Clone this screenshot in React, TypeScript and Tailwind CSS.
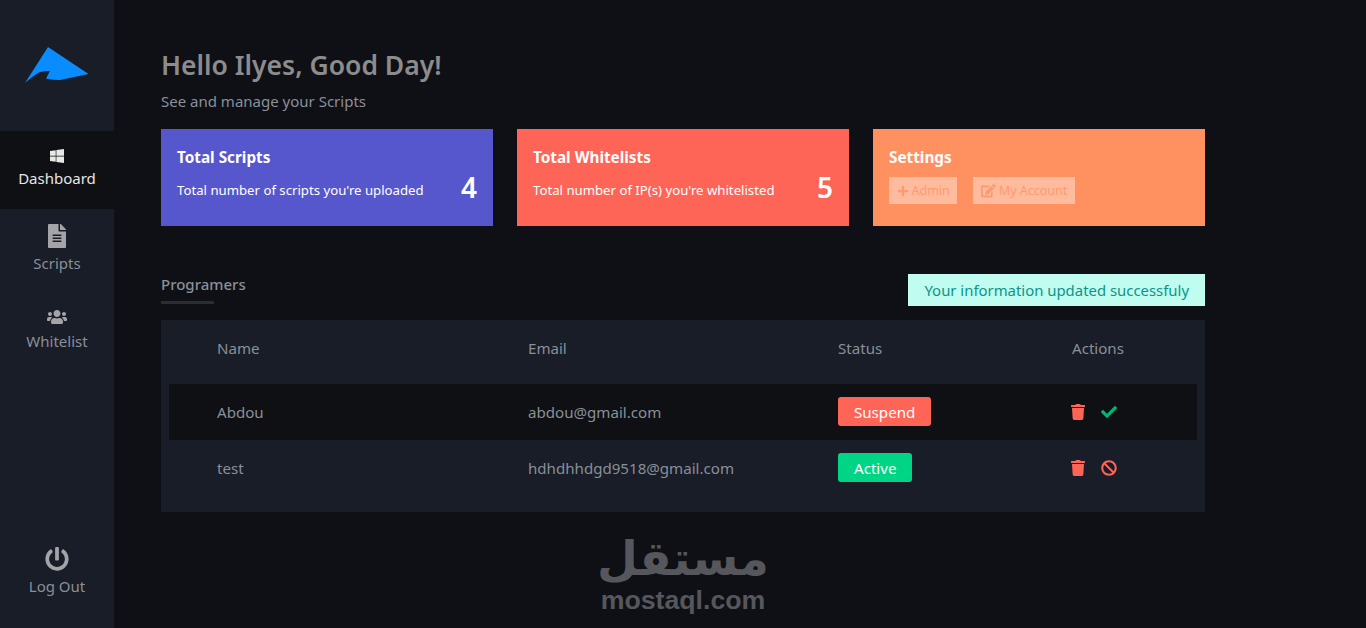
import React from 'react';
import { FaWindows, FaFileAlt, FaUsers, FaPowerOff, FaPlus, FaEdit, FaTrash, FaCheck, FaBan } from 'react-icons/fa';

const Logo = () => (
  <svg width="64" height="36" viewBox="0 0 64 36">
    <path d="M23 0 L63.5 27 L35 33 Q28 33 21 31.5 L25 24 Q20 24 15 25 Q9 28 0 36 Z" fill="#0a8cff" />
  </svg>
);

const NavItem = ({ icon, label, className }: { icon: React.ReactNode; label: string; className: string }) => (
  <a className={`flex h-[78px] flex-col items-center justify-center text-[15px] ${className}`}>
    {icon}
    <span className="leading-[22px]">{label}</span>
  </a>
);

const StatCard = ({ title, text, value, color }: { title: string; text: string; value: number; color: string }) => (
  <div className={`flex h-[97px] w-[332px] flex-col px-4 pt-[17px] text-white ${color}`}>
    <h3 className="text-[15.3px] leading-[22px] font-bold">{title}</h3>
    <div className="mt-[11px] flex items-start justify-between">
      <p className="text-[13.2px] leading-[22px]">{text}</p>
      <span className="text-[28px] leading-[16px] font-semibold">{value}</span>
    </div>
  </div>
);

const Row = ({ name, email, status, striped }: { name: string; email: string; status: 'Suspend' | 'Active'; striped?: boolean }) => (
  <div className={`flex h-[56px] items-center text-[15.1px] text-[#8a8f99] ${striped ? 'bg-[#0e1014]' : ''}`}>
    <div className="w-[359px] pl-[48px]">{name}</div>
    <div className="w-[310px]">{email}</div>
    <div className="w-[232px]">
      <span className={`mb-[2px] block h-[29px] w-fit rounded-[3px] px-4 text-[15.1px] leading-[31px] text-white ${status === 'Suspend' ? 'bg-[#ff6557]' : 'bg-[#00d586]'}`}>
        {status}
      </span>
    </div>
    <div className="flex items-center gap-[15px]">
      <FaTrash className="text-[#ff6557]" size={16} />
      {status === 'Suspend' ? <FaCheck className="text-[#00b578]" size={16} /> : <FaBan className="text-[#ff6557]" size={16} />}
    </div>
  </div>
);

export default function App() {
  return (
    <div className="relative flex h-[628px] w-full overflow-hidden bg-[#0f1015] font-['Noto_Sans','Open_Sans',sans-serif]">
      <aside className="flex w-[114px] shrink-0 flex-col bg-[#181d27]">
        <div className="flex h-[131px] items-center justify-center pb-[2px]">
          <Logo />
        </div>
        <NavItem className="gap-[3px] bg-[#0e1014] pb-[4px] text-[#e6e6e6]" label="Dashboard" icon={<FaWindows size={16} className="text-[#e8e8e8]" />} />
        <NavItem className="gap-[4px] pt-[1px] text-[#8a8f99]" label="Scripts" icon={<FaFileAlt size={24} className="text-[#a3a3a8]" />} />
        <NavItem className="gap-[3px] pt-[6px] text-[#8a8f99]" label="Whitelist" icon={<FaUsers size={20} className="text-[#a3a3a8]" />} />
        <a className="mt-auto mb-[31px] flex flex-col items-center gap-[4px] text-[15px] text-[#8a8f99]">
          <FaPowerOff size={24} className="text-[#a3a3a8]" />
          <span className="leading-[22px]">Log Out</span>
        </a>
      </aside>

      <main className="flex-1 pt-[46px] pl-[47px]">
        <div className="w-[1044px]">
          <h1 className="text-[26.5px] leading-[38px] font-semibold text-[#8c8c8c]">Hello Ilyes, Good Day!</h1>
          <p className="mt-[6px] text-[15px] leading-[22px] text-[#8a8f99]">See and manage your Scripts</p>

          <div className="mt-[17px] flex gap-[24px]">
            <StatCard title="Total Scripts" text="Total number of scripts you're uploaded" value={4} color="bg-[#5757cd]" />
            <StatCard title="Total Whitelists" text="Total number of IP(s) you're whitelisted" value={5} color="bg-[#ff6557]" />
            <div className="flex h-[97px] w-[332px] flex-col bg-[#ff9161] px-4 pt-[17px] text-white">
              <h3 className="text-[15.3px] leading-[22px] font-bold">Settings</h3>
              <div className="mt-[9px] flex gap-4 text-[12.5px] text-[#ff9a6e]">
                <span className="flex h-[27px] items-center gap-[3px] bg-[#ffbb9d] px-[7.5px] pt-[2px]">
                  <FaPlus size={12} className="-mt-[2px]" />
                  Admin
                </span>
                <span className="flex h-[27px] items-center gap-[3px] bg-[#ffbb9d] px-[7.5px] pt-[2px]">
                  <FaEdit size={15} className="-mt-[2px]" />
                  My Account
                </span>
              </div>
            </div>
          </div>

          <div className="mt-[48px] flex items-start justify-between">
            <div className="w-[53px]">
              <h4 className="-mt-px text-[15px] leading-[22px] font-medium whitespace-nowrap text-[#8a8f99]">Programers</h4>
              <div className="mt-[6px] h-[3px] bg-[#2a2d33]" />
            </div>
            <div className="h-[32px] bg-[#c0fdf0] px-4 text-[14.9px] leading-[32px] text-[#0c9488]">Your information updated successfuly</div>
          </div>

          <section className="mt-[14px] bg-[#181d27] px-2 pb-4">
            <div className="flex h-[64px] items-center pb-[8px] text-[15.1px] text-[#8a8f99]">
              <div className="w-[359px] pl-[48px]">Name</div>
              <div className="w-[310px]">Email</div>
              <div className="w-[234px]">Status</div>
              <div>Actions</div>
            </div>
            <Row striped name="Abdou" email="abdou@gmail.com" status="Suspend" />
            <Row name="test" email="hdhdhhdgd9518@gmail.com" status="Active" />
          </section>
        </div>
      </main>

      {/* mostaql watermark */}
      <div className="pointer-events-none absolute top-[530px] left-[600px] flex w-[166px] flex-col items-center text-[#55575c]">
        <span dir="rtl" className="font-['DejaVu_Sans',sans-serif] text-[47px] leading-[57px] font-bold">مستقل</span>
        <span className="font-['Liberation_Sans',sans-serif] text-[26.7px] leading-[26px] font-bold">mostaql.com</span>
      </div>
    </div>
  );
}
